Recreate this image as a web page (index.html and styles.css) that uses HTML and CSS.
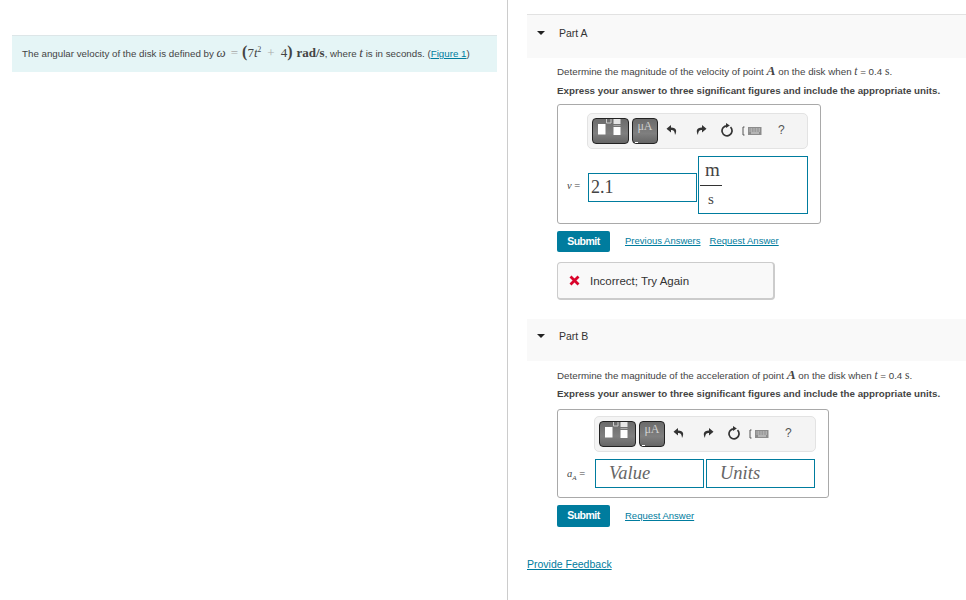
FILE: index.html
```html
<!DOCTYPE html>
<html lang="en">
<head>
<meta charset="utf-8">
<title>Part A and Part B</title>
<link rel="stylesheet" href="styles.css">
</head>
<body>
<svg class="defs" width="0" height="0" aria-hidden="true">
  <symbol id="templates" viewBox="0 0 35 24">
    <rect x="5" y="5" width="7.500" height="10.500" fill="#fff"/>
    <path d="M13.500 0 V4 H18 V0" fill="none" stroke="#c9c9c9" stroke-width="1"/>
    <rect x="20.500" y="0" width="7" height="5" fill="#e6e6e6"/>
    <rect x="20.500" y="6" width="7" height="1" fill="#aaa"/>
    <rect x="20.500" y="8" width="7" height="8" fill="#fff"/>
  </symbol>
  <symbol id="undo" viewBox="0 0 12 12">
    <path d="M5 1 L0.500 4.800 L5 8.500 V6 C7.500 6 8.800 7.300 9 11 C11 7.500 11 3.500 5 3.500 Z" fill="#333"/>
  </symbol>
  <symbol id="redo" viewBox="0 0 12 12">
    <path d="M7 1 L11.500 4.800 L7 8.500 V6 C4.500 6 3.200 7.300 3 11 C1 7.500 1 3.500 7 3.500 Z" fill="#333"/>
  </symbol>
  <symbol id="reset" viewBox="0 0 14 14">
    <path d="M7 2.800 A5 5 0 1 0 10.500 4.200" fill="none" stroke="#333" stroke-width="1.700"/>
    <path d="M6 0 L9.800 2.600 L6 5 Z" fill="#333"/>
  </symbol>
  <symbol id="keys" viewBox="0 0 20 10">
    <path d="M2.500 1 H1 V9 H2.500" fill="none" stroke="#555" stroke-width="1"/>
    <rect x="6" y="1" width="13.500" height="8" fill="#8c8c8c"/>
    <path d="M7.500 3 H18 M7.500 5 H18" stroke="#ddd" stroke-width="1" stroke-dasharray="1 .6"/>
    <rect x="9" y="6.500" width="8" height="1" fill="#ddd"/>
  </symbol>
</svg>
<div class="layout">
  <section class="left-pane">
    <div class="intro">
      The angular velocity of the disk is defined by <span class="math"><i class="omega">ω</i><span class="light eq">=</span><span class="paren">(</span>7<i>t</i><sup>2</sup><span class="light plus">+</span><span class="four">4</span><span class="paren">)</span><span class="unit">rad/s</span></span>, where <span class="math"><i>t</i></span> is in seconds. (<a href="#" class="link">Figure 1</a>)
    </div>
  </section>
  <main class="right-pane">
    <header class="part-head part-a">
      <span class="caret"></span><span>Part A</span>
    </header>
    <div class="part-body">
      <p class="desc">Determine the magnitude of the velocity of point <span class="math big"><i>A</i></span> on the disk when <span class="math"><i>t</i></span> = 0.4 <span class="math">s</span>.</p>
      <p class="instr">Express your answer to three significant figures and include the appropriate units.</p>
      <div class="answer answer-a">
        <div class="toolbar tb-a">
          <span class="tool-btn tool-wide"><svg width="35" height="24"><use href="#templates"/></svg></span>
          <span class="tool-btn tool-mu">μA</span>
          <svg class="ic ic-undo" width="12" height="12"><use href="#undo"/></svg>
          <svg class="ic ic-redo" width="12" height="12"><use href="#redo"/></svg>
          <svg class="ic ic-reset" width="14" height="14"><use href="#reset"/></svg>
          <svg class="ic ic-keys" width="20" height="10"><use href="#keys"/></svg>
          <span class="help">?</span>
        </div>
        <div class="row row-a">
          <span class="var"><i>v</i> =</span>
          <span class="field field-val">2.1</span>
          <span class="field field-frac">
            <span class="frac"><span class="num">m</span><span class="den">s</span></span>
          </span>
        </div>
      </div>
      <div class="actions">
        <button class="submit" type="button">Submit</button>
        <a href="#" class="link act-link">Previous Answers</a>
        <a href="#" class="link act-link second">Request Answer</a>
      </div>
      <div class="feedback">
        <svg width="11" height="11" viewBox="0 0 11 11"><path d="M1.500 1.500 L9.500 9.500 M9.500 1.500 L1.500 9.500" stroke="#d9042b" stroke-width="2.800"/></svg>
        <span>Incorrect; Try Again</span>
      </div>
    </div>
    <header class="part-head part-b">
      <span class="caret"></span><span>Part B</span>
    </header>
    <div class="part-body">
      <p class="desc desc-b">Determine the magnitude of the acceleration of point <span class="math big"><i>A</i></span> on the disk when <span class="math"><i>t</i></span> = 0.4 <span class="math">s</span>.</p>
      <p class="instr instr-b">Express your answer to three significant figures and include the appropriate units.</p>
      <div class="answer answer-b">
        <div class="toolbar tb-b">
          <span class="tool-btn tool-wide"><svg width="35" height="24"><use href="#templates"/></svg></span>
          <span class="tool-btn tool-mu">μA</span>
          <svg class="ic ic-undo" width="12" height="12"><use href="#undo"/></svg>
          <svg class="ic ic-redo" width="12" height="12"><use href="#redo"/></svg>
          <svg class="ic ic-reset" width="14" height="14"><use href="#reset"/></svg>
          <svg class="ic ic-keys" width="20" height="10"><use href="#keys"/></svg>
          <span class="help">?</span>
        </div>
        <div class="row row-b">
          <span class="var"><i>a<sub>A</sub></i> =</span>
          <span class="field field-ph">Value</span>
          <span class="field field-ph">Units</span>
        </div>
      </div>
      <div class="actions actions-b">
        <button class="submit" type="button">Submit</button>
        <a href="#" class="link act-link">Request Answer</a>
      </div>
    </div>
    <a href="#" class="link provide">Provide Feedback</a>
  </main>
</div>
</body>
</html>
```
FILE: styles.css
```css
* { box-sizing: border-box; }
html, body { margin: 0; height: 100%; background: #fff; overflow: hidden; }
body { font-family: "Liberation Sans", Arial, sans-serif; color: #333; font-size: 9.5px; }
.defs { position: absolute; }
.layout { display: flex; height: 600px; }
.left-pane { width: 508px; flex: none; border-right: 1px solid #ccc; padding: 35px 10px 0 12px; }
.intro { height: 37px; background: #e5f5f6; border-top: 1px solid #dde6e8; padding-left: 10px; line-height: 35px; font-size: 9.750px; color: #444; white-space: nowrap; }
.math { font-family: "Liberation Serif", "DejaVu Serif", serif; font-size: 11.500px; color: #444; line-height: 0; }
.math.big { font-size: 13.500px; font-weight: bold; }
.intro .math { font-size: 13px; }
.intro sup { font-size: 7.500px; line-height: 0; }
.light { color: #aaa; font-weight: normal; }
.eq { margin-left: 5px; }
.plus { margin: 0 6px; }
.paren { font-size: 16px; font-weight: bold; }
.eq + .paren { margin-left: 4px; }
.unit { margin-left: 4px; font-weight: bold; }
.link { color: #007c9e; text-decoration: underline; }
.right-pane { flex: 1; min-width: 0; padding: 14px 0 0 19px; }
.part-head { display: flex; align-items: center; background: #f9f9f9; font-size: 10.500px; color: #333; padding-left: 10px; gap: 14px; }
.part-a { height: 44px; border-top: 1px solid #e2e2e2; padding-bottom: 8px; }
.part-b { height: 42px; padding-bottom: 9px; margin-top: 19px; }
.caret { width: 0; height: 0; border-left: 4px solid transparent; border-right: 4px solid transparent; border-top: 4px solid #222; }
.part-body { padding-left: 30px; }
.desc { margin: 0; padding-top: 6px; line-height: 15px; height: 24px; font-size: 9.780px; color: #444; white-space: nowrap; }
.desc-b { padding-top: 7px; }
.instr { margin: 0; line-height: 14px; height: 22px; padding-top: 2px; font-size: 9.780px; font-weight: bold; color: #444; white-space: nowrap; }
.instr-b { height: 24px; }
.answer { border: 1px solid #a9a9a9; border-radius: 3px; }
.answer-a { width: 264px; height: 120px; padding: 8px 12px 0 29px; }
.answer-b { width: 272px; height: 89px; padding: 6px 12px 0 36px; }
.toolbar { display: flex; align-items: center; height: 36px; width: 221px; background: #f4f4f4; border: 1px solid #e3e3e3; border-radius: 5px; padding-left: 4px; }
.tb-b { width: 222px; }
.tool-btn { display: flex; align-items: center; justify-content: center; height: 26px; border: 1px solid #222; border-radius: 4px; background: linear-gradient(#6b6b6b, #7f7f7f 60%, #666); }
.tool-wide { width: 37px; }
.tool-mu { position: relative; width: 26px; margin-left: 3px; color: #d0d0d0; font-family: "Liberation Serif", serif; font-size: 12px; line-height: 14px; align-items: flex-start; padding-top: 0; }
.tool-mu::after { content: ""; position: absolute; left: 2px; bottom: 0; width: 3px; height: 1px; background: #fff; }
.ic { flex: none; }
.ic-undo { margin: 0 0 3px 8px; }
.ic-redo { margin: 0 0 3px 17px; }
.ic-reset { margin: 0 0 2px 13px; }
.ic-keys { margin-left: 8px; }
.help { margin: 0 0 2px 16px; font-size: 12px; color: #555; }
.row { display: flex; }
.row-a { align-items: center; margin: 7px 0 0 -22px; }
.row-b { align-items: center; margin: 7px 0 0 -28px; }
.var { font-family: "Liberation Serif", serif; font-size: 10.500px; color: #444; white-space: nowrap; }
.var sub { font-size: 7px; line-height: 0; }
.row-a .var { width: 23px; padding-left: 2px; }
.row-b .var { width: 29px; padding-left: 1px; }
.field { display: block; border: 1px solid #007c9e; font-family: "Liberation Serif", serif; color: #444; background: #fff; }
.field-val { width: 109px; height: 29px; padding-left: 2px; line-height: 27px; font-size: 18px; position: relative; top: 2px; }
.field-frac { width: 110px; height: 58px; margin-left: 1px; padding: 0 0 0 1px; }
.frac { display: inline-flex; flex-direction: column; width: 22px; font-size: 19px; }
.num { height: 29px; line-height: 25px; padding-left: 5px; border-bottom: 1px solid #333; }
.den { line-height: 27px; font-size: 15px; text-align: center; padding-left: 0; }
.field-ph { width: 109px; height: 29px; padding-left: 13px; font-style: italic; font-size: 18.500px; line-height: 27px; color: #666; }
.field-ph + .field-ph { margin-left: 2px; }
.actions { display: flex; align-items: center; margin-top: 7px; height: 21px; }
.actions-b { height: 22px; }
.submit { width: 53px; height: 100%; border: 0; border-radius: 2px; background: #007c9e; color: #fff; font: bold 10.500px "Liberation Sans", Arial, sans-serif; letter-spacing: -.5px; padding: 0 0 2px; }
.act-link { font-size: 9.500px; margin: 0 0 2px 15px; white-space: nowrap; }
.act-link.second { margin-left: 9px; }
.feedback { display: flex; align-items: center; width: 218px; height: 38px; margin-top: 10px; padding-left: 11px; gap: 10px; background: #f9f9f9; border: 1px solid #ccc; border-right-width: 2px; border-bottom-width: 2px; border-radius: 4px; font-size: 11.500px; color: #333; }
.provide { display: block; margin-top: 31px; font-size: 10.500px; }
```
